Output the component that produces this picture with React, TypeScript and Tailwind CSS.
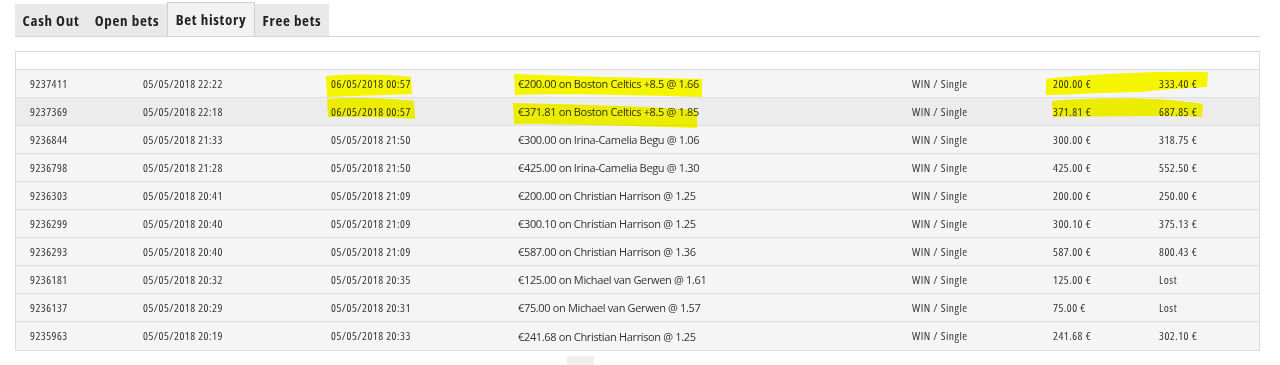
import React from "react";

const rows = [
  ["9237411", "05/05/2018 22:22", "06/05/2018 00:57", "€200.00 on Boston Celtics +8.5 @ 1.66", "WIN / Single", "200.00 €", "333.40 €"],
  ["9237369", "05/05/2018 22:18", "06/05/2018 00:57", "€371.81 on Boston Celtics +8.5 @ 1.85", "WIN / Single", "371.81 €", "687.85 €"],
  ["9236844", "05/05/2018 21:33", "05/05/2018 21:50", "€300.00 on Irina-Camelia Begu @ 1.06", "WIN / Single", "300.00 €", "318.75 €"],
  ["9236798", "05/05/2018 21:28", "05/05/2018 21:50", "€425.00 on Irina-Camelia Begu @ 1.30", "WIN / Single", "425.00 €", "552.50 €"],
  ["9236303", "05/05/2018 20:41", "05/05/2018 21:09", "€200.00 on Christian Harrison @ 1.25", "WIN / Single", "200.00 €", "250.00 €"],
  ["9236299", "05/05/2018 20:40", "05/05/2018 21:09", "€300.10 on Christian Harrison @ 1.25", "WIN / Single", "300.10 €", "375.13 €"],
  ["9236293", "05/05/2018 20:40", "05/05/2018 21:09", "€587.00 on Christian Harrison @ 1.36", "WIN / Single", "587.00 €", "800.43 €"],
  ["9236181", "05/05/2018 20:32", "05/05/2018 20:35", "€125.00 on Michael van Gerwen @ 1.61", "WIN / Single", "125.00 €", "Lost"],
  ["9236137", "05/05/2018 20:29", "05/05/2018 20:31", "€75.00 on Michael van Gerwen @ 1.57", "WIN / Single", "75.00 €", "Lost"],
  ["9235963", "05/05/2018 20:19", "05/05/2018 20:33", "€241.68 on Christian Harrison @ 1.25", "WIN / Single", "241.68 €", "302.10 €"],
];

const widths = ["w-[113px]", "w-[188px]", "w-[187px]", "w-[394px]", "w-[141px]", "w-[106px]", "w-[116px]"];

const tab = "flex items-center justify-center text-[15px] font-bold text-[#222] tracking-[0.7px]";

export default function App() {
  return (
    <div className="relative w-[1280px] h-[365px] bg-white overflow-hidden text-[#333]" style={{ fontFamily: "'Open Sans', sans-serif" }}>
      <div className="pl-[15px] pr-[20px] pt-[2px]">
        <div className="flex items-end border-b border-[#d4d4d4] h-[35px]" style={{ fontStretch: "87.5%" }}>
          <div className={`h-[32px] w-[72px] bg-[#e9e9e9] ${tab}`}>Cash Out</div>
          <div className={`h-[32px] w-[80px] bg-[#e9e9e9] ${tab}`}>Open bets</div>
          <div className={`h-[34px] w-[88px] bg-[#f2f2f2] border border-b-0 border-[#cfcfcf] ${tab}`}>Bet history</div>
          <div className={`h-[32px] w-[74px] bg-[#e9e9e9] ${tab}`}>Free bets</div>
        </div>
        <div className="mt-[14px] border border-[#dcdcdc]">
          <div className="h-[18px] bg-white border-b border-[#dcdcdc]" />
          {rows.map((r, i) => (
            <div key={i} className={`flex h-[28px] items-center border-b border-[#dedede] last:border-b-0 ${i === 1 ? "bg-[#ececec]" : "bg-[#f5f5f5]"}`}>
              {r.map((c, j) => (
                <div
                  key={j}
                  className={`${widths[j]} shrink-0 pl-[14px] leading-none whitespace-nowrap ${j === 3 ? "text-[11px] tracking-[-0.35px]" : "text-[11.5px] tracking-[0.5px]"}`}
                  style={{ fontStretch: j === 3 ? "100%" : "87.5%" }}
                >
                  {c}
                </div>
              ))}
            </div>
          ))}
        </div>
        <div className="ml-[552px] mt-[5px] w-[27px] h-[9px] bg-[#efefef]" />
      </div>
      <svg className="absolute left-0 top-0 pointer-events-none mix-blend-multiply" width="1280" height="365" viewBox="0 0 1280 365">
        <g fill="#ffff00">
          <path d="M326 76 C350 74 385 74 411 77 L412 94 C385 95 350 96 327 97 Z" />
          <path d="M327 99 C350 97 390 98 414 101 L415 119 C390 117 350 117 328 117 Z" />
          <path d="M514 74 C560 76 640 78 702 79 L702 97 C640 95 560 93 515 95 Z" />
          <path d="M513 103 C560 104 640 106 697 110 L697 128 C640 126 560 124 514 124 Z" />
          <path d="M1046 79 C1080 75 1150 71 1208 72 L1207 87 C1180 88 1160 90 1140 92 L1100 93 C1080 94 1060 95 1046 95 Z" />
          <path d="M1052 101 C1100 97 1160 97 1203 104 L1202 117 C1160 115 1100 117 1053 117 Z" />
        </g>
      </svg>
    </div>
  );
}
